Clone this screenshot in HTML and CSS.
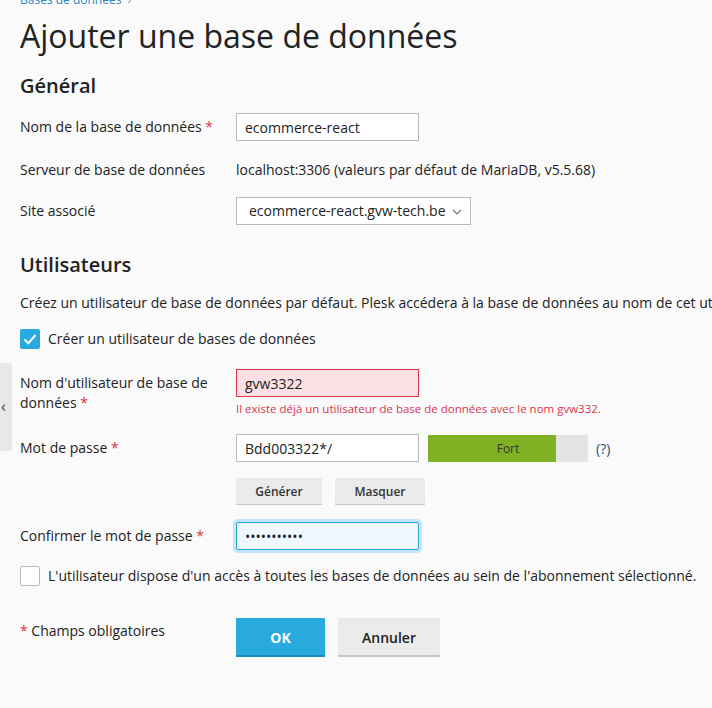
FILE: index.html
```html
<!DOCTYPE html>
<html lang="fr">
<head>
<meta charset="utf-8">
<title>Ajouter une base de données</title>
<link rel="stylesheet" href="styles.css">
</head>
<body>
<div class="side-tab"><span class="side-chevron">‹</span></div>
<main class="page">
  <div class="breadcrumb"><a href="#">Bases de données</a><span class="crumb-sep">›</span></div>
  <h1 class="title">Ajouter une base de données</h1>

  <h2 class="section">Général</h2>
  <div class="row r1">
    <div class="label">Nom de la base de données <span class="req">*</span></div>
    <div class="field"><input class="input" type="text" value="ecommerce-react"></div>
  </div>
  <div class="row r2">
    <div class="label">Serveur de base de données</div>
    <div class="field text-value">localhost:3306 (valeurs par défaut de MariaDB, v5.5.68)</div>
  </div>
  <div class="row r3">
    <div class="label">Site associé</div>
    <div class="field">
      <div class="select">ecommerce-react.gvw-tech.be
        <svg class="select-arrow" width="10" height="6" viewBox="0 0 10 6"><path d="M1 1l4 4 4-4" fill="none" stroke="#777" stroke-width="1.2"/></svg>
      </div>
    </div>
  </div>

  <h2 class="section section-users">Utilisateurs</h2>
  <p class="intro">Créez un utilisateur de base de données par défaut. Plesk accédera à la base de données au nom de cet utilisateur.</p>
  <label class="check-line c1">
    <span class="checkbox checked"><svg width="14" height="12" viewBox="0 0 14 12"><path d="M1.5 6.5l3.8 3.8L12.5 2" fill="none" stroke="#fff" stroke-width="2"/></svg></span>
    <span>Créer un utilisateur de bases de données</span>
  </label>

  <div class="row r4">
    <div class="label">Nom d'utilisateur de base de données <span class="req">*</span></div>
    <div class="field">
      <input class="input input-error" type="text" value="gvw3322">
      <div class="error-msg">Il existe déjà un utilisateur de base de données avec le nom gvw332.</div>
    </div>
  </div>
  <div class="row r5">
    <div class="label">Mot de passe <span class="req">*</span></div>
    <div class="field pw-field">
      <input class="input" type="text" value="Bdd003322*/">
      <div class="strength">
        <div class="strength-fill" style="width:80%"></div>
        <div class="strength-text">Fort</div>
      </div>
      <span class="help">(?)</span>
    </div>
  </div>
  <div class="row r6">
    <div class="label"></div>
    <div class="field btns">
      <button class="btn-small">Générer</button>
      <button class="btn-small btn-mask">Masquer</button>
    </div>
  </div>
  <div class="row r7">
    <div class="label">Confirmer le mot de passe <span class="req">*</span></div>
    <div class="field"><input class="input input-focus" type="text" value="•••••••••••"></div>
  </div>
  <label class="check-line c2">
    <span class="checkbox"></span>
    <span>L'utilisateur dispose d'un accès à toutes les bases de données au sein de l'abonnement sélectionné.</span>
  </label>

  <div class="row r8">
    <div class="label"><span class="req">*</span> Champs obligatoires</div>
    <div class="field actions">
      <button class="btn btn-primary">OK</button>
      <button class="btn btn-cancel">Annuler</button>
    </div>
  </div>
</main>
</body>
</html>
```
FILE: styles.css
```css
html, body {
  margin: 0;
  padding: 0;
  background: #fafafa;
  overflow: hidden;
}
body {
  font-family: "Open Sans", "Noto Sans", sans-serif;
  font-size: 14px;
  color: #222;
  width: 712px;
  height: 708px;
  position: relative;
}
.page {
  padding-left: 20px;
}
.breadcrumb {
  height: 8px;
  font-size: 12px;
  line-height: 16px;
  margin-top: -8px;
}
.breadcrumb a {
  color: #2c85c6;
  text-decoration: none;
}
.crumb-sep {
  color: #999;
  margin-left: 6px;
}
.title {
  margin: 18px 0 0 0;
  font-weight: 400;
  font-size: 32px;
  line-height: 36px;
  color: #222;
}
.section {
  margin: 20px 0 0 0;
  font-size: 20px;
  font-weight: 600;
  line-height: 24px;
  color: #222;
}
.row {
  display: grid;
  grid-template-columns: 216px 1fr;
  align-items: start;
}
.label {
  padding-top: 4px;
  line-height: 20px;
  padding-right: 10px;
}
.req {
  color: #d8344f;
}
.r1 { margin-top: 15px; }
.r2 { margin-top: 15px; }
.r3 { margin-top: 17px; }
.text-value {
  line-height: 20px;
  padding-top: 4px;
}
.input {
  box-sizing: border-box;
  width: 183px;
  height: 28px;
  border: 1px solid #b8b8b8;
  background: #fff;
  font-family: inherit;
  font-size: 14px;
  color: #222;
  padding: 0 8px;
  margin: 0;
  border-radius: 0;
  outline: none;
  display: block;
}
.select {
  box-sizing: border-box;
  width: 235px;
  height: 28px;
  border: 1px solid #b8b8b8;
  background: #fff;
  padding: 0 0 0 12px;
  line-height: 26px;
  position: relative;
}
.select-arrow {
  position: absolute;
  right: 8px;
  top: 11px;
}
.section-users {
  margin-top: 28px;
}
.intro {
  margin: 16px 0 0 0;
  line-height: 20px;
  white-space: nowrap;
}
.check-line {
  display: flex;
  align-items: center;
  gap: 8px;
  line-height: 20px;
}
.c1 { margin-top: 16px; }
.checkbox {
  box-sizing: border-box;
  width: 20px;
  height: 20px;
  border-radius: 2px;
  border: 1px solid #b8b8b8;
  background: #fff;
  display: flex;
  align-items: center;
  justify-content: center;
  flex: none;
}
.checkbox.checked {
  background: #28aadf;
  border-color: #28aadf;
}
.r4 { margin-top: 20px; }
.input-error {
  background: #fde0e3;
  border-color: #d8344f;
}
.error-msg {
  color: #d8344f;
  font-size: 11.5px;
  line-height: 16px;
  margin-top: 4px;
  white-space: nowrap;
}
.r5 { margin-top: 17px; }
.pw-field {
  display: flex;
  align-items: center;
}
.strength {
  width: 160px;
  height: 27px;
  background: #e4e4e4;
  margin-left: 9px;
  display: grid;
}
.strength-fill,
.strength-text {
  grid-area: 1 / 1;
}
.strength-fill {
  height: 100%;
  background: #80b024;
  border-radius: 1px;
}
.strength-text {
  font-size: 12px;
  line-height: 27px;
  text-align: center;
  color: #333;
}
.help {
  margin-left: 8px;
  color: #2b4f7a;
}
.r6 { margin-top: 16px; }
.btns {
  display: flex;
  gap: 13px;
}
.btn-small {
  box-sizing: border-box;
  height: 27px;
  width: 86px;
  border: none;
  border-radius: 1px;
  background: #ebebeb;
  box-shadow: inset 0 -1px 0 #c6c6c6;
  font-family: inherit;
  font-size: 12px;
  font-weight: 600;
  color: #333;
  padding: 0;
}
.btn-mask { width: 90px; }
.r7 { margin-top: 17px; }
.input-focus {
  background: #f0f8ff;
  border-color: #28aadf;
  box-shadow: 0 0 0 3px #c2e5f9;
  border-radius: 2px;
  font-size: 14px;
}
.c2 { margin-top: 16px; }
.r8 { margin-top: 32px; }
.r8 .label { padding-top: 3px; }
.actions {
  display: flex;
  gap: 13px;
}
.btn {
  box-sizing: border-box;
  height: 39px;
  border: none;
  border-radius: 1px;
  font-family: inherit;
  font-size: 14px;
  font-weight: 600;
  padding: 0;
}
.btn-primary {
  width: 89px;
  background: #28aadf;
  color: #fff;
  font-weight: 700;
  box-shadow: inset 0 -2px 0 #1f8bb8;
}
.btn-cancel {
  width: 102px;
  background: #ebebeb;
  color: #222;
  box-shadow: inset 0 -2px 0 #c6c6c6;
}
.side-tab {
  position: absolute;
  left: 0;
  top: 363px;
  width: 12px;
  height: 88px;
  background: #e8e8e8;
  border-radius: 0 3px 3px 0;
}
.side-chevron {
  position: absolute;
  left: 1px;
  top: 35px;
  font-size: 16px;
  line-height: 16px;
  color: #444;
}
```
